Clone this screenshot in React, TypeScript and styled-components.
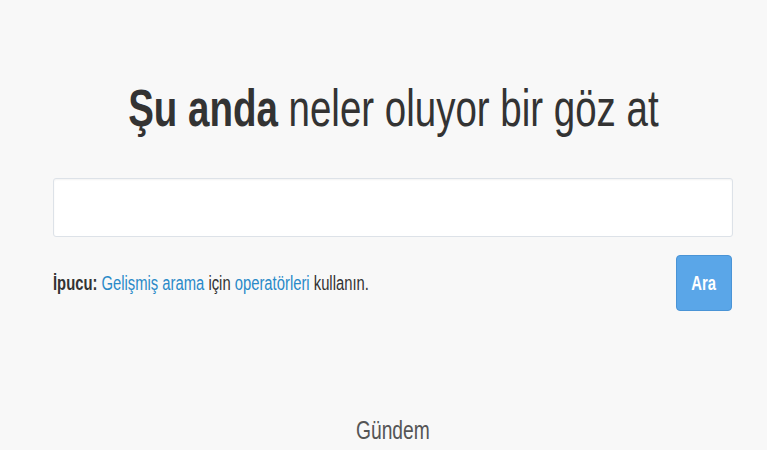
import styled, { createGlobalStyle } from 'styled-components';

const Global = createGlobalStyle`
  body {
    margin: 0;
    background: #f8f8f8;
    font-family: "Liberation Sans", Arial, sans-serif;
    color: #333;
  }
`;

const Page = styled.div`
  padding: 0 34px 0 53px;
  display: flex;
  flex-direction: column;
`;

// the whole screenshot is horizontally condensed, so text gets squeezed
const Narrow = styled.span<{ $origin?: string }>`
  display: inline-block;
  flex-shrink: 0;
  white-space: nowrap;
  transform: scaleX(0.74);
  transform-origin: ${p => p.$origin || 'center'};
`;

const Heading = styled.h1`
  margin: 76px 0 0;
  display: flex;
  justify-content: center;
  font-size: 52px;
  font-weight: normal;
  line-height: 64px;
  color: #333;
  b { font-weight: bold; }
`;

const SearchInput = styled.input`
  margin-top: 38px;
  height: 59px;
  box-sizing: border-box;
  width: 100%;
  background: #fff;
  border: 1px solid #dde2e8;
  border-radius: 3px;
  box-shadow: inset 0 1px 2px rgba(0, 0, 0, 0.05);
  outline: none;
`;

const Row = styled.div`
  display: flex;
  justify-content: space-between;
  align-items: center;
  margin-top: 18px;
`;

const Hint = styled.p`
  margin: 0;
  font-size: 20px;
  color: #333;
  b { font-weight: bold; }
`;

const Link = styled.a`
  color: #2a8ac8;
  text-decoration: none;
`;

const Button = styled.button`
  width: 56px;
  height: 56px;
  margin-right: 1px;
  background: #5aa6e8;
  border: 1px solid #4a94d6;
  border-radius: 4px;
  color: #fff;
  font-family: "Liberation Sans", Arial, sans-serif;
  font-size: 20px;
  font-weight: bold;
  padding: 0;
  cursor: pointer;
`;

const Trends = styled.h2`
  margin: 104px 0 0;
  display: flex;
  justify-content: center;
  font-size: 26px;
  font-weight: normal;
  color: #555;
`;

const App = () => (
  <>
    <Global />
    <Page>
      <Heading>
        <Narrow><b>Şu anda</b> neler oluyor bir göz at</Narrow>
      </Heading>
      <SearchInput type="text" />
      <Row>
        <Hint>
          <Narrow $origin="left">
            <b>İpucu:</b> <Link href="#">Gelişmiş arama</Link> için <Link href="#">operatörleri</Link> kullanın.
          </Narrow>
        </Hint>
        <Button>
          <Narrow>Ara</Narrow>
        </Button>
      </Row>
      <Trends>
        <Narrow>Gündem</Narrow>
      </Trends>
    </Page>
  </>
);

export default App;
